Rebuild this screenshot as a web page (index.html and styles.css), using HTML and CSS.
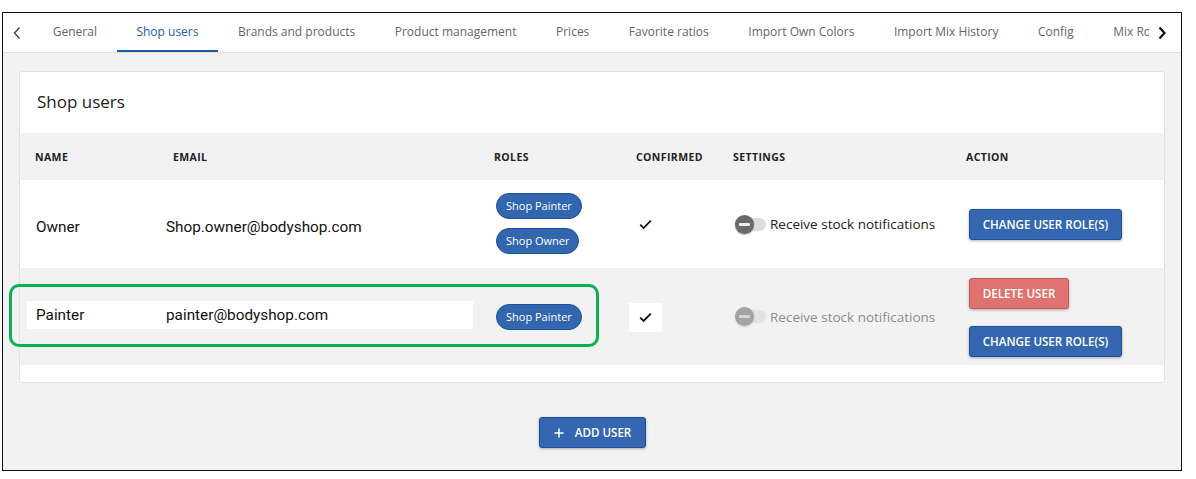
FILE: index.html
```html
<!DOCTYPE html>
<html>
<head>
<meta charset="utf-8">
<link rel="stylesheet" href="styles.css">
</head>
<body>
<div class="frame">
  <div class="tabbar">
    <div class="arrow arrow-left">
      <svg width="10" height="14" viewBox="0 0 10 14"><path d="M7.5 1.5 L2.5 7 L7.5 12.5" fill="none" stroke="#444" stroke-width="1.4"/></svg>
    </div>
    <div class="tabs">
      <div class="tab">General</div>
      <div class="tab active">Shop users</div>
      <div class="tab">Brands and products</div>
      <div class="tab">Product management</div>
      <div class="tab">Prices</div>
      <div class="tab">Favorite ratios</div>
      <div class="tab">Import Own Colors</div>
      <div class="tab">Import Mix History</div>
      <div class="tab">Config</div>
      <div class="tab tab-last">Mix Ro</div>
    </div>
    <div class="arrow arrow-right">
      <svg width="10" height="14" viewBox="0 0 10 14"><path d="M2.5 1.5 L7.5 7 L2.5 12.5" fill="none" stroke="#111" stroke-width="2.2"/></svg>
    </div>
  </div>

  <div class="content">
    <div class="card">
      <div class="card-title">Shop users</div>
      <div class="table">
        <div class="row head">
          <div class="hc">Name</div>
          <div class="hc">Email</div>
          <div class="hc">Roles</div>
          <div class="hc">Confirmed</div>
          <div class="hc">Settings</div>
          <div class="hc">Action</div>
        </div>

        <div class="row r1">
          <div class="dc c1 text">Owner</div>
          <div class="dc c2 text">Shop.owner@bodyshop.com</div>
          <div class="dc c3 chips">
            <span class="chip">Shop Painter</span>
            <span class="chip">Shop Owner</span>
          </div>
          <div class="dc c4">
            <span class="check"><svg width="13" height="11" viewBox="0 0 13 11"><path d="M1.2 5.6 L4.6 9 L11.8 1.6" fill="none" stroke="#111" stroke-width="1.7"/></svg></span>
          </div>
          <div class="dc c5">
            <span class="toggle"><span class="knob"></span></span>
            <span class="setting-label">Receive stock notifications</span>
          </div>
          <div class="dc c6">
            <button class="btn btn-blue">Change user role(s)</button>
          </div>
        </div>

        <div class="row r2">
          <div class="dc c1 text"><span class="hl hl-l">Painter</span></div>
          <div class="dc c2 text"><span class="hl hl-r">painter@bodyshop.com</span></div>
          <div class="dc c3 chips">
            <span class="chip">Shop Painter</span>
          </div>
          <div class="dc c4">
            <span class="check check-box"><svg width="13" height="11" viewBox="0 0 13 11"><path d="M1.2 5.6 L4.6 9 L11.8 1.6" fill="none" stroke="#111" stroke-width="1.9"/></svg></span>
          </div>
          <div class="dc c5">
            <span class="toggle disabled"><span class="knob"></span></span>
            <span class="setting-label muted">Receive stock notifications</span>
          </div>
          <div class="dc c6 actions">
            <button class="btn btn-red">Delete user</button>
            <button class="btn btn-blue">Change user role(s)</button>
          </div>
          <div class="highlight"></div>
        </div>
      </div>
      <div class="card-foot"></div>
    </div>

    <div class="add-wrap">
      <button class="btn btn-blue btn-add">
        <svg width="10" height="10" viewBox="0 0 10 10"><path d="M5 0.5 V9.5 M0.5 5 H9.5" stroke="#fff" stroke-width="1.5"/></svg>
        <span>Add user</span>
      </button>
    </div>
  </div>
</div>
</body>
</html>
```

FILE: styles.css
```css
* { box-sizing: border-box; }

body {
  margin: 0;
  background: #fff;
  font-family: "Open Sans", "Noto Sans", sans-serif;
  color: #333;
}

.frame {
  position: relative;
  margin: 12px 0 0 2px;
  width: 1180px;
  height: 459px;
  border: 1px solid #111;
  background: #f2f2f2;
  overflow: hidden;
}

/* Tabs */
.tabbar {
  display: flex;
  align-items: stretch;
  height: 40px;
  background: #fff;
  border-bottom: 1px solid #dedede;
}
.arrow {
  flex: 0 0 auto;
  display: flex;
  align-items: center;
  justify-content: center;
  background: #fff;
}
.arrow-left { width: 30px; padding-right: 2px; }
.arrow-right { width: 32px; padding-right: 6px; }
.tabs {
  flex: 1 1 auto;
  display: flex;
  white-space: nowrap;
  min-width: 0;
}
.tab {
  flex: 0 0 auto;
  padding: 0 19.75px;
  font-size: 12px;
  line-height: 37px;
  color: #666;
  border-bottom: 2px solid transparent;
}
.tab-last { padding-right: 0; }
.tab.active {
  color: #1a5db3;
  border-bottom-color: #1a5aa8;
}

/* Content */
.content {
  padding: 18px 16px 0 16px;
}
.card {
  background: #fff;
  border: 1px solid #e2e2e2;
  border-radius: 3px;
}
.card-title {
  height: 61px;
  padding: 18px 0 0 17px;
  font-size: 17px;
  color: #222;
}
.row {
  display: grid;
  grid-template-columns: 138px 321px 142px 97px 233px 1fr;
  align-items: center;
  position: relative;
}
.head {
  height: 47px;
  background: #f2f2f2;
}
.hc {
  padding-left: 15px;
  font-size: 10.5px;
  font-weight: 700;
  letter-spacing: 0.4px;
  text-transform: uppercase;
  color: #222;
  padding-top: 1px;
}
.r1 { height: 88px; background: #fff; }
.r2 { height: 97px; background: #f2f2f2; }

.text {
  font-family: Roboto, "Liberation Sans", sans-serif;
  font-size: 15.3px;
  color: #111;
}
.r1 .c1 { padding-left: 16px; padding-top: 5px; }
.r1 .c2 { padding-left: 8px; padding-top: 5px; }

.hl {
  display: flex;
  align-items: center;
  height: 28px;
  background: #fff;
}
.hl-l { margin-left: 7px; padding-left: 9px; }
.hl-r { margin-right: 6px; padding-left: 8px; }
.r2 .c1, .r2 .c2 { margin-top: -3px; }

.chips {
  display: flex;
  flex-direction: column;
  align-items: flex-start;
  gap: 9px;
  padding-left: 17px;
}
.chip {
  display: inline-block;
  height: 26px;
  line-height: 24px;
  padding: 0 9px;
  border-radius: 13px;
  background: #3266ae;
  border: 1px solid #1d4f9c;
  color: #fff;
  font-size: 11px;
  font-weight: 500;
}
.r1 .chips { padding-top: 0; margin-top: -2px; }
.r2 .chips { padding-top: 1px; }

.dc.c4 { padding-left: 8px; }
.check {
  display: flex;
  align-items: center;
  justify-content: center;
  width: 33px;
  height: 29px;
}
.check-box { background: #fff; margin-top: 1px; }

.dc.c5 {
  display: flex;
  align-items: center;
  padding-left: 17px;
}
.toggle {
  position: relative;
  width: 31px;
  height: 13px;
  border-radius: 7px;
  background: #ddd;
  margin-right: 4px;
}
.knob {
  position: absolute;
  left: 0;
  top: -3px;
  width: 19px;
  height: 19px;
  border-radius: 50%;
  background: #6a6a6a;
  box-shadow: 0 1px 2px rgba(0,0,0,0.3);
}
.knob::after {
  content: "";
  position: absolute;
  left: 4px;
  top: 8px;
  width: 11px;
  height: 3px;
  background: #eee;
  border-radius: 1px;
}
.toggle.disabled { background: #e2e2e2; }
.toggle.disabled .knob { background: #a4a4a4; box-shadow: 0 1px 2px rgba(0,0,0,0.15); }
.toggle.disabled .knob::after { background: #d6d6d6; }
.setting-label {
  font-size: 13.5px;
  color: #222;
}
.setting-label.muted { color: #8c8c8c; }

.dc.c6 { padding-left: 18px; }
.actions {
  display: flex;
  flex-direction: column;
  align-items: flex-start;
  gap: 17px;
  padding-top: 1px;
}

.btn {
  font-family: "Open Sans", "Noto Sans", sans-serif;
  font-size: 11.6px;
  font-weight: 600;
  text-transform: uppercase;
  color: #fff;
  border-radius: 3px;
  cursor: pointer;
  height: 31px;
  padding: 0 8px;
  box-shadow: 0 1px 3px rgba(0,0,0,0.3);
  white-space: nowrap;
}
.btn-blue {
  background: #3467b0;
  border: 1px solid #1f4f9b;
  width: 153px;
}
.btn-red {
  background: #e07370;
  border: 1px solid #d05656;
  width: 100px;
}

.highlight {
  position: absolute;
  left: -11px;
  top: 16px;
  width: 590px;
  height: 63px;
  border: 3px solid #0db04f;
  border-radius: 10px;
  pointer-events: none;
}

.card-foot { height: 17px; }

.add-wrap {
  display: flex;
  justify-content: center;
  padding-top: 34px;
}
.btn-add {
  width: 107px;
  height: 31px;
  display: flex;
  align-items: center;
  justify-content: center;
  gap: 11px;
  padding: 0 0 0 1px;
}
```
